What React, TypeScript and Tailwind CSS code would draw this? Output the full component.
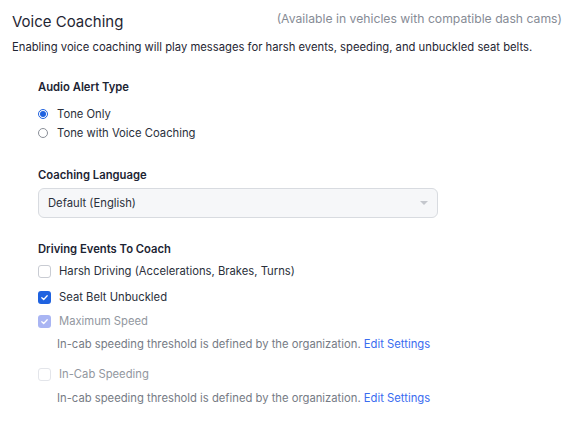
import React from "react";

function Check({ checked, disabled }: { checked?: boolean; disabled?: boolean }) {
  if (checked) {
    return (
      <span
        className={
          "flex h-[13px] w-[13px] shrink-0 items-center justify-center rounded-[3px] " +
          (disabled ? "bg-[#a9b5f3]" : "bg-[#1f62e0]")
        }
      >
        <svg width="9" height="9" viewBox="0 0 10 10" fill="none">
          <path d="M2 5.2 L4.1 7.2 L8 3" stroke="white" strokeWidth="1.4" strokeLinecap="round" strokeLinejoin="round" />
        </svg>
      </span>
    );
  }
  return (
    <span
      className={
        "block h-[13px] w-[13px] shrink-0 rounded-[3px] border bg-white " +
        (disabled ? "border-[#e3e5ea]" : "border-[#c9ccd3]")
      }
    />
  );
}

function Radio({ checked }: { checked?: boolean }) {
  return checked ? (
    <span className="flex h-[10px] w-[10px] shrink-0 items-center justify-center rounded-full border border-[#1f62e0] bg-white">
      <span className="block h-[6px] w-[6px] rounded-full bg-[#1f62e0]" />
    </span>
  ) : (
    <span className="block h-[10px] w-[10px] shrink-0 rounded-full border border-[#8a8f98] bg-white" />
  );
}

export default function App() {
  return (
    <div className="min-h-[437px] w-[569px] bg-white px-3 pt-[12px] font-['Inter',sans-serif] text-[#1f2937]">
      <div className="flex items-start justify-between">
        <div className="text-[15px] leading-[20px] text-[#1f2633]">Voice Coaching</div>
        <div className="-mr-[5px] text-[12.2px] leading-[14px] text-[#868b95]">
          (Available in vehicles with compatible dash cams)
        </div>
      </div>
      <div className="mt-[7px] text-[11.25px] leading-[16px] text-[#1f2633]">
        Enabling voice coaching will play messages for harsh events, speeding, and unbuckled seat belts.
      </div>

      <div className="pl-[26px]">
        <div className="mt-[24px] text-[11.25px] font-semibold leading-[16px] text-[#1c2433]">Audio Alert Type</div>
        <div className="mt-[11px] flex items-center gap-[9px] text-[11.25px] leading-[16px] text-[#2a303b]">
          <Radio checked />
          <span>Tone Only</span>
        </div>
        <div className="mt-[3px] flex items-center gap-[9px] text-[11.25px] leading-[16px] text-[#2a303b]">
          <Radio />
          <span>Tone with Voice Coaching</span>
        </div>

        <div className="mt-[26px] text-[11.25px] font-semibold leading-[16px] text-[#1c2433]">Coaching Language</div>
        <div className="mt-[5px] flex h-[30px] w-[400px] items-center justify-between rounded-[6px] border border-[#d8dbe0] bg-[#f6f7f9] pl-[9px] pr-[9px] text-[11.25px] text-[#2a303b]">
          <span>Default (English)</span>
          <svg width="8" height="5" viewBox="0 0 8 5">
            <path d="M0 0 L8 0 L4 4 Z" fill="#c4c7cd" />
          </svg>
        </div>

        <div className="mt-[23px] text-[11.25px] font-semibold leading-[16px] text-[#1c2433]">Driving Events To Coach</div>
        <div className="mt-[6px] flex items-center gap-[8px] text-[11.25px] leading-[16px] text-[#2a303b]">
          <Check />
          <span>Harsh Driving (Accelerations, Brakes, Turns)</span>
        </div>
        <div className="mt-[10px] flex items-center gap-[8px] text-[11.25px] leading-[16px] text-[#2a303b]">
          <Check checked />
          <span>Seat Belt Unbuckled</span>
        </div>
        <div className="mt-[8px] flex items-center gap-[8px] text-[11.25px] leading-[16px] text-[#9297a0]">
          <Check checked disabled />
          <span>Maximum Speed</span>
        </div>
        <div className="mt-[7px] pl-[19px] text-[11.25px] leading-[16px] text-[#767b85]">
          In-cab speeding threshold is defined by the organization.{" "}
          <span className="text-[#3a6cf0]">Edit Settings</span>
        </div>
        <div className="mt-[14px] flex items-center gap-[8px] text-[11.25px] leading-[16px] text-[#9297a0]">
          <Check disabled />
          <span>In-Cab Speeding</span>
        </div>
        <div className="mt-[8px] pl-[19px] text-[11.25px] leading-[16px] text-[#767b85]">
          In-cab speeding threshold is defined by the organization.{" "}
          <span className="text-[#3a6cf0]">Edit Settings</span>
        </div>
      </div>
    </div>
  );
}
